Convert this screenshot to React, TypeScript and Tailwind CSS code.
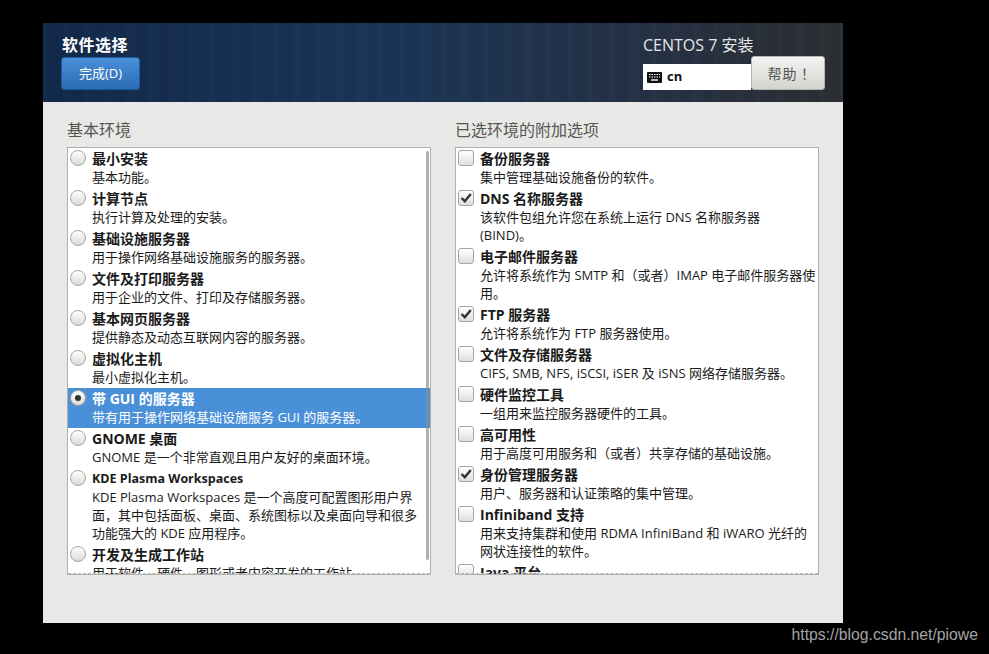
const envs = [
  { title: "最小安装", lines: ["基本功能。"] },
  { title: "计算节点", lines: ["执行计算及处理的安装。"] },
  { title: "基础设施服务器", lines: ["用于操作网络基础设施服务的服务器。"] },
  { title: "文件及打印服务器", lines: ["用于企业的文件、打印及存储服务器。"] },
  { title: "基本网页服务器", lines: ["提供静态及动态互联网内容的服务器。"] },
  { title: "虚拟化主机", lines: ["最小虚拟化主机。"] },
  { title: "带 GUI 的服务器", lines: ["带有用于操作网络基础设施服务 GUI 的服务器。"], selected: true },
  { title: "GNOME 桌面", lines: ["GNOME 是一个非常直观且用户友好的桌面环境。"] },
  {
    title: "KDE Plasma Workspaces",
    narrow: true,
    lines: ["KDE Plasma Workspaces 是一个高度可配置图形用户界", "面，其中包括面板、桌面、系统图标以及桌面向导和很多", "功能强大的 KDE 应用程序。"],
  },
  { title: "开发及生成工作站", lines: ["用于软件、硬件、图形或者内容开发的工作站。"] },
]

const addons = [
  { title: "备份服务器", lines: ["集中管理基础设施备份的软件。"] },
  { title: "DNS 名称服务器", lines: ["该软件包组允许您在系统上运行 DNS 名称服务器", "(BIND)。"], checked: true },
  { title: "电子邮件服务器", lines: ["允许将系统作为 SMTP 和（或者）IMAP 电子邮件服务器使", "用。"] },
  { title: "FTP 服务器", lines: ["允许将系统作为 FTP 服务器使用。"], checked: true },
  { title: "文件及存储服务器", lines: ["CIFS, SMB, NFS, iSCSI, iSER 及 iSNS 网络存储服务器。"] },
  { title: "硬件监控工具", lines: ["一组用来监控服务器硬件的工具。"] },
  { title: "高可用性", lines: ["用于高度可用服务和（或者）共享存储的基础设施。"] },
  { title: "身份管理服务器", lines: ["用户、服务器和认证策略的集中管理。"], checked: true },
  { title: "Infiniband 支持", lines: ["用来支持集群和使用 RDMA InfiniBand 和 iWARO 光纤的", "网状连接性的软件。"] },
  { title: "Java 平台", lines: ["Java 支持。"] },
]

const Radio = ({ on }: { on?: boolean }) => (
  <span className="mt-[2px] flex h-4 w-4 shrink-0 items-center justify-center rounded-full border border-[#a5a5a2] bg-gradient-to-b from-white to-[#d9d9d6]">
    {on && <span className="h-[6px] w-[6px] rounded-full bg-[#2e3436]" />}
  </span>
)

const Check = ({ on }: { on?: boolean }) => (
  <span className="mt-[2px] flex h-4 w-4 shrink-0 items-center justify-center rounded-[3px] border border-[#a5a5a2] bg-gradient-to-b from-white to-[#dededb]">
    {on && (
      <svg width="14" height="14" viewBox="0 0 14 14" fill="none">
        <path d="M2.5 7 L5.8 10.2 L11.8 3" stroke="#2e3436" strokeWidth="2.4" />
      </svg>
    )}
  </span>
)

type Item = { title: string; lines: string[]; selected?: boolean; narrow?: boolean }

const Row = ({ item, control }: { item: Item; control: React.ReactNode }) => (
  <div className={`flex gap-[6px] pb-[2px] pl-[2px] leading-[18px] ${item.selected ? "bg-[#4a90d9] text-white" : "text-[#1a1a1a]"}`}>
    {control}
    <div className="whitespace-nowrap pt-[2px] text-[13px]">
      <div className={`font-bold ${item.narrow ? "text-[12.5px]" : "text-[14px]"}`}>{item.title}</div>
      {item.lines.map((line) => (
        <div key={line}>{line}</div>
      ))}
    </div>
  </div>
)

const App = () => {
  return (
    <div className="relative h-[654px] w-[989px] overflow-hidden bg-black pl-[43px] pt-[23px] font-['Open_Sans','Noto_Sans_CJK_SC',sans-serif]">
      <div className="flex h-[600px] w-[800px] flex-col bg-[#e8e8e6]">
        {/* header */}
        <div className="flex h-[79px] justify-between bg-[repeating-linear-gradient(90deg,rgba(255,255,255,0.015)_0px,rgba(255,255,255,0)_7px,rgba(0,0,0,0.04)_13px,rgba(255,255,255,0)_21px),linear-gradient(90deg,#12294a_0%,#1c3557_45%,#253145_75%,#2c2f33_100%)] pl-[18px] pr-[18px]">
          <div className="pt-[12px]">
            <div className="pl-[1px] text-[16px] font-bold leading-[20px] tracking-[0.5px] text-white">软件选择</div>
            <button className="mt-[2px] h-[33px] w-[79px] rounded-[3px] border border-[#1d5a9e] bg-gradient-to-b from-[#4a90d9] to-[#2a6bb5] text-[13px] text-white">
              完成(D)
            </button>
          </div>
          <div className="pt-[12px]">
            <div className="text-[16px] leading-[20px] text-[#e6e6e6]">CENTOS 7 安装</div>
            <div className="mt-[1px] flex items-end">
              <div className="flex h-[26px] w-[108px] items-center gap-[5px] bg-white pl-[4px]">
                <svg width="15" height="11" viewBox="0 0 15 11">
                  <rect width="15" height="11" rx="1" fill="#111" />
                  <path d="M2 2.5h1.5M4.5 2.5H6M7 2.5h1.5M9.5 2.5H11M12 2.5h1M2 5h1.5M4.5 5H6M7 5h1.5M9.5 5H11M12 5h1" stroke="#fff" strokeWidth="1.2" />
                  <path d="M4 8h7" stroke="#fff" strokeWidth="1.4" />
                </svg>
                <span className="text-[13px] font-bold text-[#111]">cn</span>
              </div>
              <button className="h-[34px] w-[74px] rounded-[3px] border border-[#b5b5b2] bg-gradient-to-b from-[#f4f4f2] to-[#d3d3d0] pl-[4px] font-['Noto_Sans_CJK_TC',sans-serif] text-[14px] tracking-[1px] text-[#555]">
                帮助！
              </button>
            </div>
          </div>
        </div>

        {/* panels */}
        <div className="flex gap-[24px] pl-[24px] pt-[17px]">
          <div className="w-[364px]">
            <div className="text-[16px] leading-[22px] text-[#555753]">基本环境</div>
            <div className="relative mt-[6px] h-[428px] overflow-hidden border border-[#b0b0ae] bg-white">
              {envs.map((item) => (
                <Row key={item.title} item={item} control={<Radio on={item.selected} />} />
              ))}
              <div className="absolute bottom-[14px] right-[1px] top-[3px] w-[3px] rounded-full bg-[#8d8d8b]/70" />
              <div className="absolute bottom-0 left-0 right-0 border-b border-dashed border-[#b8b8b6]" />
            </div>
          </div>
          <div className="w-[364px]">
            <div className="text-[16px] leading-[22px] text-[#555753]">已选环境的附加选项</div>
            <div className="relative mt-[6px] h-[428px] overflow-hidden border border-[#b0b0ae] bg-white">
              {addons.map((item) => (
                <Row key={item.title} item={item} control={<Check on={item.checked} />} />
              ))}
              <div className="absolute bottom-0 left-0 right-0 border-b border-dashed border-[#b8b8b6]" />
            </div>
          </div>
        </div>
      </div>

      {/* watermark */}
      <div className="absolute bottom-[10px] right-[11px] font-['Liberation_Sans',sans-serif] text-[15.75px] leading-[18px] text-[#a4a4a4]">
        https://blog.csdn.net/piowe
      </div>
    </div>
  )
}

export default App
